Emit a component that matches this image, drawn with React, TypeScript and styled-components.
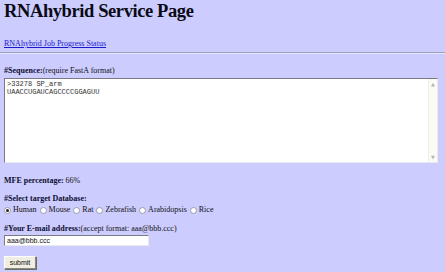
import React, { useState } from "react";
import styled, { createGlobalStyle } from "styled-components";

const GlobalStyle = createGlobalStyle`
  html, body {
    margin: 0;
    padding: 0;
    background: #ccccff;
  }
  body {
    font-family: "Liberation Serif", "Times New Roman", serif;
    color: #000;
  }
`;

const Page = styled.div`
  display: flex;
  flex-direction: column;
  padding: 0 4px;
  width: 445px;
  height: 272px;
  box-sizing: border-box;
  overflow: hidden;
`;

const Title = styled.h1`
  margin: 0;
  font-size: 18.5px;
  line-height: 22px;
  font-weight: bold;
  letter-spacing: -0.4px;
  color: #0a0a14;
`;

const StatusLink = styled.a`
  margin-top: 17px;
  font-size: 8px;
  line-height: 10px;
  color: #1a1acc;
  text-decoration: underline;
  align-self: flex-start;
`;

const Rule = styled.hr`
  margin: 3px -4px 0;
  height: 0;
  border: none;
  border-top: 1px solid #a0a0b8;
  border-bottom: 1px solid #e4e4ff;
`;

const Label = styled.div<{ $gap: number }>`
  margin-top: ${(p) => p.$gap}px;
  font-size: 8px;
  line-height: 10px;
  color: #111;

  b {
    color: #0c0c30;
  }
`;

const SeqFrame = styled.div`
  margin-top: 2px;
  width: 434px;
  height: 85px;
  box-sizing: border-box;
  display: flex;
  background: #fff;
  border-top: 1px solid #7a7a86;
  border-left: 1px solid #7a7a86;
  border-right: 1px solid #e8e8f0;
  border-bottom: 1px solid #e8e8f0;
`;

const SeqBox = styled.textarea`
  flex: 1;
  resize: none;
  border: none;
  padding: 1px 2px;
  font-family: "Liberation Mono", "Courier New", monospace;
  font-size: 7px;
  line-height: 8px;
  color: #333;
  background: transparent;
  outline: none;
  overflow: hidden;
`;

const ScrollStrip = styled.div`
  width: 8px;
  display: flex;
  flex-direction: column;
  justify-content: space-between;
  align-items: center;
  background: #fbfbf5;
  border-left: 1px solid #efefe8;
  padding: 2px 0;
  font-size: 5px;
  line-height: 6px;
  color: #b8b8b0;
  font-family: "DejaVu Sans", sans-serif;
`;

const RadioRow = styled.div`
  margin-top: 1px;
  display: flex;
  align-items: center;
  gap: 3px;
  font-size: 8px;
  line-height: 10px;
  color: #111;
`;

const RadioItem = styled.label`
  display: flex;
  align-items: center;
  gap: 2px;
  cursor: pointer;
`;

const Dot = styled.span<{ $on: boolean }>`
  width: 7px;
  height: 7px;
  box-sizing: border-box;
  border-radius: 50%;
  background: #fff;
  border: 1px solid #9a9ab0;
  display: flex;
  align-items: center;
  justify-content: center;

  &::after {
    content: "";
    width: 3px;
    height: 3px;
    border-radius: 50%;
    background: ${(p) => (p.$on ? "#222" : "transparent")};
  }
`;

const EmailInput = styled.input`
  margin-top: 1px;
  width: 145px;
  height: 11px;
  box-sizing: border-box;
  padding: 0 2px;
  font-family: "Liberation Sans", Arial, sans-serif;
  font-size: 7px;
  color: #111;
  background: #fff;
  border-top: 1px solid #7a7a86;
  border-left: 1px solid #7a7a86;
  border-right: 1px solid #e8e8f0;
  border-bottom: 1px solid #e8e8f0;
  outline: none;
`;

const SubmitButton = styled.button`
  margin-top: 10px;
  align-self: flex-start;
  width: 32px;
  height: 13px;
  padding: 0;
  font-family: "Liberation Sans", Arial, sans-serif;
  font-size: 7px;
  color: #111;
  background: #f0ede2;
  border: 1px solid #8a8a80;
  border-top-color: #fff;
  border-left-color: #fff;
  box-shadow: 1px 1px 0 #6a6a66;
`;

const databases = ["Human", "Mouse", "Rat", "Zebrafish", "Arabidopsis", "Rice"];

const App = () => {
  const [db, setDb] = useState("Human");

  return (
    <>
      <GlobalStyle />
      <Page>
        <Title>RNAhybrid Service Page</Title>
        <StatusLink href="#">RNAhybrid Job Progress Status</StatusLink>
        <Rule />

        <Label $gap={12}>
          <b>#Sequence:</b>(require FastA format)
        </Label>
        <SeqFrame>
          <SeqBox defaultValue={">33278 SP_arm\nUAACCUGAUCAGCCCCGGAGUU"} />
          <ScrollStrip>
            <span>▲</span>
            <span>▼</span>
          </ScrollStrip>
        </SeqFrame>

        <Label $gap={13}>
          <b>MFE percentage:</b> 66%
        </Label>

        <Label $gap={8}>
          <b>#Select target Database:</b>
        </Label>
        <RadioRow>
          {databases.map((name) => (
            <RadioItem key={name} onClick={() => setDb(name)}>
              <Dot $on={db === name} />
              {name}
            </RadioItem>
          ))}
        </RadioRow>

        <Label $gap={9}>
          <b>#Your E-mail address:</b>(accept format: aaa@bbb.ccc)
        </Label>
        <EmailInput defaultValue="aaa@bbb.ccc" />

        <SubmitButton type="button">submit</SubmitButton>
      </Page>
    </>
  );
};

export default App;
